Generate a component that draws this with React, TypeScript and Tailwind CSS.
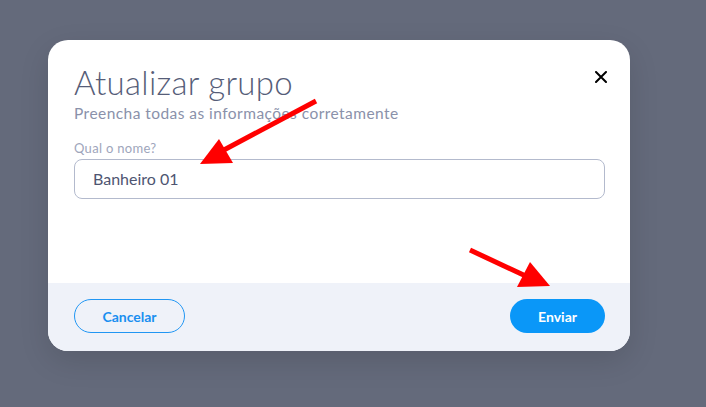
import React from "react";

export default function App() {
  return (
    <div
      className="relative w-[706px] h-[407px] overflow-hidden bg-[#646a7b] pl-[48px] pt-[40px]"
      style={{ fontFamily: "Lato, 'Open Sans', sans-serif" }}
    >
      <div className="w-[582px] h-[311px] rounded-[20px] bg-white overflow-hidden flex flex-col shadow-[0_10px_30px_rgba(0,0,0,0.12)]">
        <div className="relative flex-1 pl-[26px] pr-[25px] pt-[22px]">
          <button className="absolute right-[22px] top-[30px] w-[14px] h-[14px] flex items-center justify-center">
            <svg width="12" height="12" viewBox="0 0 12 12">
              <path d="M1 1L11 11M11 1L1 11" stroke="#000" strokeWidth="2" strokeLinecap="round" />
            </svg>
          </button>
          <h1 className="text-[33px] leading-[40px] font-light text-[#565d78] tracking-[0.3px]">Atualizar grupo</h1>
          <p className="mt-[1px] text-[15.5px] leading-[20px] text-[#8a91aa] tracking-[0.45px]">Preencha todas as informações corretamente</p>
          <label className="block mt-[17px] text-[13px] leading-[16px] text-[#9ea5bb] tracking-[0.3px]">Qual o nome?</label>
          <div className="mt-[3px] h-[40px] rounded-[8px] border border-[#b3bacd] flex items-center pl-[18px] text-[16px] text-[#4e5571]">
            Banheiro 01
          </div>
        </div>
        <div className="h-[68px] bg-[#eff2f9] flex items-start justify-between pl-[26px] pr-[25px] pt-[16px]">
          <button className="w-[111px] h-[34px] rounded-full border border-[#2196f3] text-[#1a8ff0] text-[14px] font-bold">
            Cancelar
          </button>
          <button className="w-[95px] h-[34px] rounded-full bg-[#0a97f8] text-white text-[14px] font-bold">
            Enviar
          </button>
        </div>
      </div>
      <svg className="absolute left-0 top-0 pointer-events-none" width="706" height="407" viewBox="0 0 706 407">
        <line x1="316" y1="101" x2="222" y2="151" stroke="#ff0000" strokeWidth="5" />
        <polygon points="219,139 200,164 233,163" fill="#ff0000" />
        <line x1="470" y1="250" x2="530" y2="278" stroke="#ff0000" strokeWidth="5" />
        <polygon points="530,262 517,287 550,286" fill="#ff0000" />
      </svg>
    </div>
  );
}
